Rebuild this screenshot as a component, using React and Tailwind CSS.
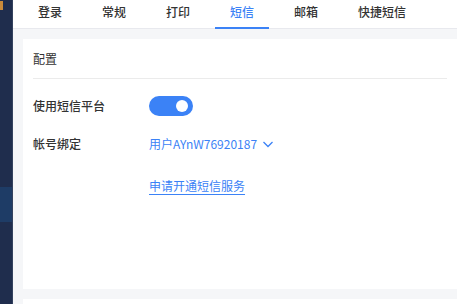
import React from "react";

const tabs = ["登录", "常规", "打印", "短信", "邮箱", "快捷短信"];

export default function App() {
  return (
    <div
      className="flex h-[304px] w-[457px] overflow-hidden bg-[#f5f6f8] text-[12px] text-[#333]"
      style={{ fontFamily: '"Noto Sans CJK SC", "Noto Sans", sans-serif' }}
    >
      <aside className="flex w-[13px] shrink-0 flex-col border-r border-[#34425e] bg-[#1f2d4d]">
        <div className="ml-0 mt-[1px] h-[9px] w-[3px] bg-[#c98a3a]" />
        <div className="mt-[177px] h-[35px] bg-[#1e3c66]" />
      </aside>
      <main className="flex min-w-0 flex-1 flex-col">
        <nav className="flex h-[29px] shrink-0 gap-[10px] border-b border-[#e8e9ee] bg-white pl-[10px]">
          {tabs.map((t) => (
            <div
              key={t}
              className={
                "relative flex h-full shrink-0 items-center justify-center whitespace-nowrap px-[15px] pb-[4px] font-medium " +
                (t === "短信" ? "text-[#3b82f6]" : "text-[#333]")
              }
            >
              {t}
              {t === "短信" && (
                <div className="absolute bottom-[-1px] left-0 h-[2px] w-full bg-[#3b82f6]" />
              )}
            </div>
          ))}
        </nav>
        <div className="flex flex-col gap-[10px] py-[10px] pl-[10px]">
          <section className="h-[250px] shrink-0 bg-white px-[10px]">
            <div className="flex h-[40px] items-center border-b border-[#ebebeb] pt-[1px]">配置</div>
            <div className="flex h-[52px] items-center pt-[1px]">
              <div className="w-[116px] font-medium">使用短信平台</div>
              <div className="flex h-[20px] w-[44px] items-center justify-end rounded-full bg-[#3b82f6] pr-[5px]">
                <div className="h-[12px] w-[12px] rounded-full bg-white" />
              </div>
            </div>
            <div className="flex h-[26px] items-center">
              <div className="w-[116px] font-medium">帐号绑定</div>
              <div className="flex items-center gap-[5px] text-[#3b82f6]">
                <span>用户AYnW76920187</span>
                <svg width="12" height="12" viewBox="0 0 12 12" fill="none">
                  <path d="M1.5 4l4.5 4.5L10.5 4" stroke="#3b82f6" strokeWidth="1.3" />
                </svg>
              </div>
            </div>
            <div className="flex h-[56px] items-center pl-[116px] pt-[2px]">
              <span className="text-[#3b82f6] underline underline-offset-[3px]">申请开通短信服务</span>
            </div>
          </section>
          <section className="h-[40px] shrink-0 bg-white" />
        </div>
      </main>
    </div>
  );
}
